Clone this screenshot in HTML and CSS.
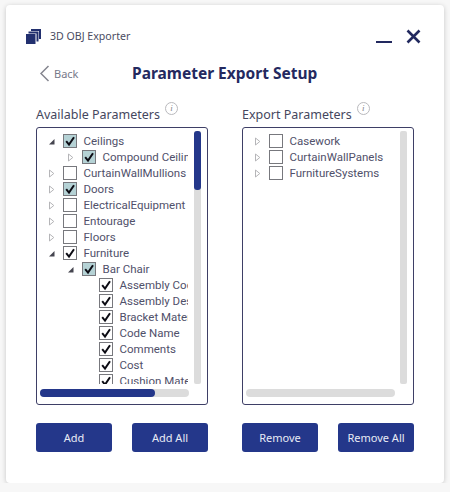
FILE: index.html
```html
<!DOCTYPE html>
<html lang="en">
<head>
    <meta charset="UTF-8">
    <title>Parameter Export Setup</title>
    <link rel="stylesheet" href="styles.css">
</head>
<body>
    <svg class="defs" width="0" height="0">
        <symbol id="check" viewBox="0 0 12 12"><path d="M2.200 6.200 5 9.600 10 2.200" fill="none" stroke="#0c0c14" stroke-width="2"/></symbol>
        <symbol id="open" viewBox="0 0 7 9"><path d="M6.500 2v5.500H1z" fill="#45454f"/></symbol>
        <symbol id="closed" viewBox="0 0 7 9"><path d="M1.500 1 5.800 4.500 1.500 8z" fill="#fff" stroke="#b5b5b8"/></symbol>
    </svg>

    <div class="window">
        <div class="titlebar">
            <svg class="logo" width="15" height="15" viewBox="0 0 15 15">
                <path d="M5 0h10v10h-2V2H5z" fill="#22306f"/>
                <path d="M2.500 2.500h10v10h-2v-8h-8z" fill="#22306f"/>
                <rect x="0" y="5" width="9.500" height="10" fill="#22306f"/>
            </svg>
            <span class="app-name">3D OBJ Exporter</span>
            <div class="window-buttons">
                <span class="minimize"></span>
                <svg width="15" height="15" viewBox="0 0 15 15"><path d="M1.500 1.500 13.500 13.500M13.500 1.500 1.500 13.500" stroke="#22295f" stroke-width="2.600"/></svg>
            </div>
        </div>

        <div class="header">
            <div class="back">
                <svg width="11" height="17" viewBox="0 0 11 17"><path d="M9.500 1 2 8.500 9.500 16" fill="none" stroke="#85868f" stroke-width="1.500"/></svg>
                <span>Back</span>
            </div>
            <h1>Parameter Export Setup</h1>
        </div>

        <div class="columns">
            <div class="column">
                <div class="column-title">
                    <span>Available Parameters</span>
                    <span class="info">i</span>
                </div>
                <div class="panel">
                    <div class="panel-body">
                        <div class="tree">
                            <div class="row"><svg class="arrow"><use href="#open"/></svg><span class="box partial"><svg><use href="#check"/></svg></span><span class="label">Ceilings</span></div>
                            <div class="row level-1"><svg class="arrow"><use href="#closed"/></svg><span class="box partial"><svg><use href="#check"/></svg></span><span class="label">Compound Ceilings</span></div>
                            <div class="row"><svg class="arrow"><use href="#closed"/></svg><span class="box"></span><span class="label">CurtainWallMullions</span></div>
                            <div class="row"><svg class="arrow"><use href="#closed"/></svg><span class="box partial"><svg><use href="#check"/></svg></span><span class="label">Doors</span></div>
                            <div class="row"><svg class="arrow"><use href="#closed"/></svg><span class="box"></span><span class="label">ElectricalEquipment</span></div>
                            <div class="row"><svg class="arrow"><use href="#closed"/></svg><span class="box"></span><span class="label">Entourage</span></div>
                            <div class="row"><svg class="arrow"><use href="#closed"/></svg><span class="box"></span><span class="label">Floors</span></div>
                            <div class="row"><svg class="arrow"><use href="#open"/></svg><span class="box"><svg><use href="#check"/></svg></span><span class="label">Furniture</span></div>
                            <div class="row level-1"><svg class="arrow"><use href="#open"/></svg><span class="box partial"><svg><use href="#check"/></svg></span><span class="label">Bar Chair</span></div>
                            <div class="row level-2"><span class="box"><svg><use href="#check"/></svg></span><span class="label">Assembly Code</span></div>
                            <div class="row level-2"><span class="box"><svg><use href="#check"/></svg></span><span class="label">Assembly Description</span></div>
                            <div class="row level-2"><span class="box"><svg><use href="#check"/></svg></span><span class="label">Bracket Material</span></div>
                            <div class="row level-2"><span class="box"><svg><use href="#check"/></svg></span><span class="label">Code Name</span></div>
                            <div class="row level-2"><span class="box"><svg><use href="#check"/></svg></span><span class="label">Comments</span></div>
                            <div class="row level-2"><span class="box"><svg><use href="#check"/></svg></span><span class="label">Cost</span></div>
                            <div class="row level-2"><span class="box"><svg><use href="#check"/></svg></span><span class="label">Cushion Material</span></div>
                        </div>
                        <div class="scroll-v"><div class="thumb-v"></div></div>
                    </div>
                    <div class="scroll-h"><div class="thumb-h"></div></div>
                </div>
                <div class="actions">
                    <button>Add</button>
                    <button>Add All</button>
                </div>
            </div>

            <div class="column">
                <div class="column-title">
                    <span>Export Parameters</span>
                    <span class="info">i</span>
                </div>
                <div class="panel">
                    <div class="panel-body">
                        <div class="tree">
                            <div class="row"><svg class="arrow"><use href="#closed"/></svg><span class="box"></span><span class="label">Casework</span></div>
                            <div class="row"><svg class="arrow"><use href="#closed"/></svg><span class="box"></span><span class="label">CurtainWallPanels</span></div>
                            <div class="row"><svg class="arrow"><use href="#closed"/></svg><span class="box"></span><span class="label">FurnitureSystems</span></div>
                        </div>
                        <div class="scroll-v"></div>
                    </div>
                    <div class="scroll-h"></div>
                </div>
                <div class="actions">
                    <button>Remove</button>
                    <button>Remove All</button>
                </div>
            </div>
        </div>
    </div>
</body>
</html>
```
FILE: styles.css
```css
body {
    margin: 0;
    background-color: #f7f7f7;
    font-family: "Noto Sans", sans-serif;
    color: #45475e;
}

.defs {
    display: block;
    height: 0;
}

.window {
    width: 438px;
    height: 478px;
    margin: 5px 0 0 6px;
    padding: 18px 30px 0;
    box-sizing: border-box;
    background-color: white;
    border-radius: 4px;
    box-shadow: 0px 1px 5px rgba(0, 0, 0, 0.2);
}

/* Title bar */
.titlebar {
    display: flex;
    align-items: center;
    height: 26px;
}

.logo {
    margin-left: -10px;
}

.app-name {
    margin-left: 9px;
    font-size: 10.6px;
    color: #4a4c62;
}

.window-buttons {
    display: flex;
    align-items: center;
    gap: 14px;
    margin-left: auto;
    margin-right: -7px;
}

.minimize {
    width: 16px;
    height: 2px;
    margin-top: 12px;
    background-color: #22295f;
}

/* Header */
.header {
    display: flex;
    align-items: center;
    height: 24px;
    margin-top: 12px;
}

.back {
    display: flex;
    align-items: center;
    gap: 4px;
    width: 93px;
    margin-left: 3px;
    font-size: 11px;
    color: #77798a;
}

h1 {
    margin: 0;
    font-size: 15.5px;
    font-weight: 700;
    color: #24295f;
    white-space: nowrap;
}

/* Columns */
.columns {
    display: flex;
    gap: 34px;
    margin-top: 16px;
}

.column {
    width: 172px;
}

.column-title {
    display: flex;
    align-items: flex-start;
    gap: 5px;
    height: 26px;
    font-size: 12.5px;
    line-height: 27px;
    white-space: nowrap;
}

.info {
    width: 11px;
    height: 11px;
    margin-top: 1px;
    border: 1px solid #b9b9bd;
    border-radius: 50%;
    font-family: "Liberation Serif", serif;
    font-size: 9px;
    font-style: italic;
    line-height: 11px;
    text-align: center;
    color: #85858c;
}

.panel {
    height: 278px;
    box-sizing: border-box;
    padding: 3px 6px 7px 3px;
    border: 1.5px solid #3e3f66;
    border-radius: 3px;
}

.panel-body {
    display: flex;
    height: 253px;
}

.tree {
    width: 149px;
    padding-top: 2px;
    overflow: hidden;
}

.row {
    display: flex;
    align-items: center;
    height: 16px;
    padding-left: 8px;
    font-family: Roboto, sans-serif;
    font-size: 11.5px;
    color: #50506a;
    white-space: nowrap;
}

.level-1 {
    padding-left: 27px;
}

.level-2 {
    padding-left: 59px;
}

.arrow {
    flex: none;
    width: 7px;
    height: 9px;
}

.box {
    flex: none;
    width: 14px;
    height: 14px;
    margin-left: 8px;
    box-sizing: border-box;
    border: 1px solid #77787d;
    background-color: white;
}

.box svg {
    display: block;
    width: 12px;
    height: 12px;
}

.box.partial {
    background-color: #b5d2d5;
}

.label {
    margin-left: 6.5px;
}

.level-2 .box {
    margin-left: 0;
}

.scroll-v {
    width: 7px;
    margin-left: 6px;
    background-color: #dcdcdc;
    border-radius: 2px;
}

.thumb-v {
    height: 59px;
    background-color: #24378a;
    border-radius: 3px;
}

.scroll-h {
    width: 149px;
    height: 8px;
    margin-top: 5px;
    background-color: #dcdcdc;
    border-radius: 4px;
}

.thumb-h {
    width: 115px;
    height: 8px;
    background-color: #24378a;
    border-radius: 4px;
}

/* Buttons */
.actions {
    display: flex;
    justify-content: space-between;
    margin-top: 18px;
}

button {
    width: 76px;
    height: 29px;
    padding: 0;
    background-color: #24378a;
    color: #e8ebf5;
    border: none;
    border-radius: 3px;
    font-family: "Noto Sans", sans-serif;
    font-size: 11px;
    cursor: pointer;
}
```
